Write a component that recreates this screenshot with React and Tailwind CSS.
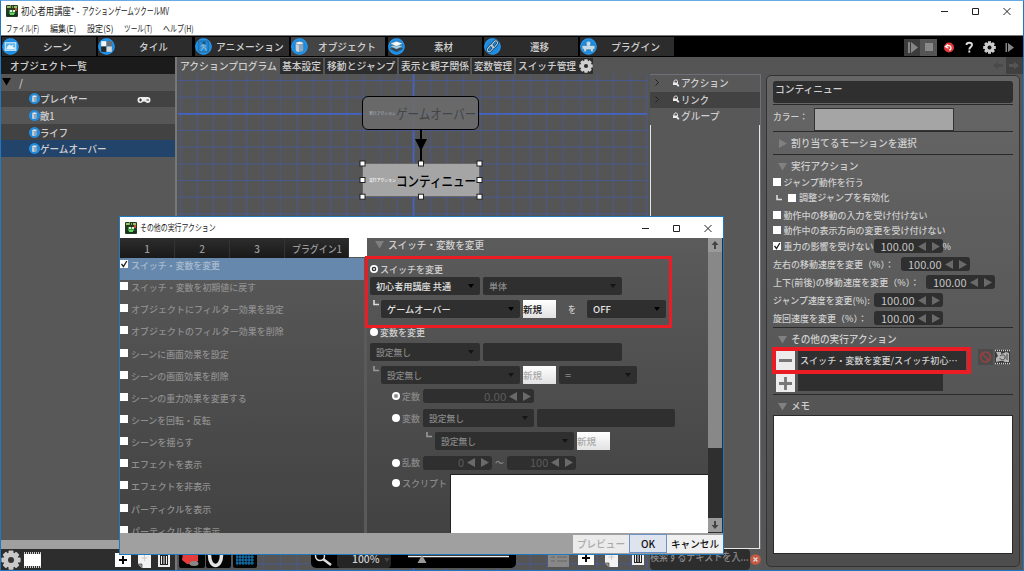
import { useLayoutEffect, useRef, useState } from 'react';

// Text squeezed or stretched horizontally so that it is exactly w pixels wide
const Fit = ({ w, className = '', children }) => {
  const ref = useRef(null);
  const [scale, setScale] = useState(1);

  useLayoutEffect(() => {
    if (ref.current) setScale(w / ref.current.offsetWidth);
  }, [w]);

  return (
    <span className={`inline-block shrink-0 whitespace-nowrap ${className}`} style={{ width: w }}>
      <span ref={ref} className="inline-block origin-left" style={{ transform: `scaleX(${scale})` }}>
        {children}
      </span>
    </span>
  );
};

const Gear = ({ size = 14, color = '#d0d0d0', hole = '#2c2c2c' }) => (
  <svg width={size} height={size} viewBox="0 0 16 16" className="shrink-0">
    <g fill={color}>
      <circle cx="8" cy="8" r="6" />
      {[0, 45, 90, 135].map((a) => (
        <rect key={a} x="6" y="0.3" width="4" height="15.4" rx="0.8" transform={`rotate(${a} 8 8)`} />
      ))}
    </g>
    <circle cx="8" cy="8" r="2.4" fill={hole} />
  </svg>
);

const AppIcon = () => (
  <svg width="12" height="12" viewBox="0 0 12 12" className="shrink-0">
    <rect width="12" height="12" rx="1" fill="#243a22" />
    <path d="M1 1h3v2H1zM8 1h3v2H8z" fill="#9ac36b" />
    <path d="M4 0h1v3H4zM6 1h1v2H6z" fill="#7f9f5e" />
    <path d="M3 5h6v5H3z" fill="#3d9c43" />
    <path d="M4 5h2v2H4zM7 5h2v2H7z" fill="#e8efe0" />
    <path d="M9 3h2v3H9z" fill="#c8542f" />
    <path d="M1 9h10v2H1z" fill="#16341a" />
    <path d="M4 8h4v2H4z" fill="#66d069" />
  </svg>
);

const WindowButtons = ({ className = '' }) => (
  <svg width="70" height="10" viewBox="0 0 70 10" fill="none" stroke="#222" className={`shrink-0 ${className}`}>
    <path d="M0 5.5h7" />
    <path d="M31.5 2.5h6v6h-6z" />
    <path d="M62.5 2l7 7M69.5 2l-7 7" />
  </svg>
);

const cylinder = (
  <g>
    <path d="M4.5 5v6.5c0 2 7 2 7 0V5z" fill="#8ea6b8" />
    <path d="M4.5 5v6.5c0 1 1.5 1.4 3 1.5V5z" fill="#c3d1db" />
    <ellipse cx="8" cy="4.8" rx="3.5" ry="1.5" fill="#eef3f6" stroke="#587287" strokeWidth=".5" />
  </g>
);

const tabGlyphs = {
  scene: (
    <g>
      <rect x="3" y="4.5" width="10" height="7" fill="#55b4ee" stroke="#e6f3fb" />
      <path d="M4 10.5h8V9l-2-.5 1-2-3 .5-1-1L5 8z" fill="#e6f3fb" />
    </g>
  ),
  tile: (
    <g>
      <path d="M3 3h5v5H3z" fill="#f5f5f5" />
      <path d="M8 3h5v5H8z" fill="#6b6f73" />
      <path d="M3 8h5v5H3z" fill="#262626" />
      <path d="M8 8h5v5H8z" fill="#dadada" />
    </g>
  ),
  anime: (
    <g fill="none" stroke="#174f78" strokeWidth="1.1">
      <rect x="3.5" y="3" width="9" height="10" stroke="#2b6e9e" />
      <circle cx="8.5" cy="4.8" r="1" fill="#6e9ab5" />
      <path d="M8.5 6L7.5 9l-2 3M7.8 8.8l2.2 1 .5 2.4M5.5 8l2-1.6 3 1.6" stroke="#8fb3c9" />
    </g>
  ),
  object: cylinder,
  material: (
    <g stroke="#33536b" strokeWidth=".4">
      <path d="M8 8.2l6 2-6 2.8-6-2.8z" fill="#37434d" />
      <path d="M8 5.8l6 2-6 2.8-6-2.8z" fill="#a6cfe6" />
      <path d="M8 3l6 2.2-6 2.8-6-2.8z" fill="#f3f8fb" />
    </g>
  ),
  link: (
    <g fill="none" stroke="#123f60" strokeWidth="2.2">
      <rect x="2.5" y="8" width="7" height="3.6" rx="1.8" transform="rotate(-50 6 9.8)" />
      <rect x="6.5" y="4" width="7" height="3.6" rx="1.8" transform="rotate(-50 10 5.8)" />
      <g stroke="#bcd3e2" strokeWidth="1">
        <rect x="2.5" y="8" width="7" height="3.6" rx="1.8" transform="rotate(-50 6 9.8)" />
        <rect x="6.5" y="4" width="7" height="3.6" rx="1.8" transform="rotate(-50 10 5.8)" />
      </g>
    </g>
  ),
  plugin: (
    <path
      d="M2 7h4.500C5 4.500 6 3 8 3s3 1.500 1.500 4H14v3.500h-1.500V13H10v-2H6v2H3.500v-2.500H2z"
      fill="#c3dae8"
      stroke="#2a6c98"
      strokeWidth=".5"
    />
  ),
};

const RoundIcon = ({ name, size = 17 }) => (
  <svg width={size} height={size} viewBox="0 0 16 16" className="shrink-0">
    <circle cx="8" cy="8" r="7.800" fill="#1c8be0" />
    <circle cx="8" cy="8" r="7.200" fill="none" stroke="#2b9bf0" strokeWidth=".8" />
    {tabGlyphs[name]}
  </svg>
);

const mainTabs = [
  { label: 'シーン', icon: 'scene', w: 29 },
  { label: 'タイル', icon: 'tile', w: 29 },
  { label: 'アニメーション', icon: 'anime', w: 68 },
  { label: 'オブジェクト', icon: 'object', w: 58, active: true },
  { label: '素材', icon: 'material', w: 19 },
  { label: '遷移', icon: 'link', w: 19 },
  { label: 'プラグイン', icon: 'plugin', w: 49 },
];

const subTabs = [
  { label: '基本設定', w: 39, cls: 'w-[43px]' },
  { label: '移動とジャンプ', w: 68, cls: 'w-[72px]' },
  { label: '表示と親子関係', w: 68, cls: 'w-[71px]' },
  { label: '変数管理', w: 38, cls: 'w-[42px]' },
  { label: 'スイッチ管理', w: 58, cls: 'w-[62px]' },
];

const objects = [
  { label: 'プレイヤー', w: 48, bg: 'bg-[#424242]', pad: true },
  { label: '敵1', w: 15, bg: 'bg-[#565656]' },
  { label: 'ライフ', w: 28, bg: 'bg-[#424242]' },
  { label: 'ゲームオーバー', w: 67, bg: 'bg-[#22436a]' },
];

const menus = [
  { label: 'ファイル(F)', w: 33, gap: 'mr-[11px]' },
  { label: '編集(E)', w: 26, gap: 'mr-[11px]' },
  { label: '設定(S)', w: 26, gap: 'mr-[11px]' },
  { label: 'ツール(T)', w: 28, gap: 'mr-[11px]' },
  { label: 'ヘルプ(H)', w: 31, gap: '' },
];

const TitleBar = () => (
  <div className="h-[35px] shrink-0 border-b border-[#777] bg-white font-normal text-[#222]">
    <div className="flex h-[20px] items-center pl-[5px] pr-[12px]">
      <AppIcon />
      <span className="ml-[3px] flex text-[10px] leading-none">
        <Fit w={58}>初心者用講座* -</Fit>
        <Fit w={87} className="ml-[3px]">アクションゲームツクールMV</Fit>
      </span>
      <WindowButtons className="ml-auto" />
    </div>
    <div className="flex h-[15px] items-center pl-[5px] text-[9px] leading-none">
      {menus.map((m) => (
        <Fit key={m.label} w={m.w} className={m.gap}>{m.label}</Fit>
      ))}
    </div>
  </div>
);

const MainTabs = () => (
  <div className="flex h-[21px] shrink-0 bg-black pl-[1px] pt-px pb-px">
    <div className="flex gap-[2.400px]">
      {mainTabs.map((t) => (
        <div
          key={t.label}
          className={`flex w-[94px] items-center ${t.active ? 'bg-[#444]' : 'bg-[#2c2c2c]'}`}
        >
          <RoundIcon name={t.icon} />
          <div className="flex flex-1 justify-center pb-px text-[10px]">
            <Fit w={t.w}>{t.label}</Fit>
          </div>
        </div>
      ))}
    </div>
    <svg width="120" height="18" viewBox="903 40 120 18" className="ml-auto mt-[2px]">
      <path d="M904 40h16v17h-16z" fill="#3c3c3c" />
      <path d="M920 40h17v17h-17z" fill="#555" />
      <path d="M908 43h2v11h-2zM911 43l7 5.500-7 5.500z" fill="#858585" />
      <path d="M925 44h8v8h-8z" fill="#888" />
      <circle cx="949" cy="48.500" r="5" fill="#e8393b" />
      <path d="M946 48c1-2 5-2 5 1 0 1.500-1 2-2 2M948 45.500l-2.500 2.200 3 1.500" fill="none" stroke="#fff" strokeWidth="1.200" />
      <path d="M966.500 46c0-3 5.500-3 5.500 0 0 2-2.700 2-2.700 4.500M969.300 51.500v2" fill="none" stroke="#ddd" strokeWidth="1.900" />
      <g fill="#ccc">
        <circle cx="989.500" cy="48.500" r="5" />
        {[0, 45, 90, 135].map((a) => (
          <rect key={a} x="988" y="42.200" width="3" height="12.600" transform={`rotate(${a} 989.500 48.500)`} />
        ))}
      </g>
      <path d="M1005.500 44h1.500v9h-1.500zM1008 44l6 4.500-6 4.500z" fill="#858585" />
      <circle cx="989.500" cy="48.500" r="2" fill="#111" />
    </svg>
  </div>
);

const PlusIcon = () => (
  <svg width="16" height="14" viewBox="0 0 16 14">
    <path d="M0 0h16v14H0z" fill="#fff" />
    <path d="M8 3v8M4 7h8" stroke="#000" strokeWidth="2" />
  </svg>
);

const PageIcon = () => (
  <svg width="13" height="16" viewBox="0 0 13 16">
    <path d="M0 0h13v16H4l-4-4z" fill="#f2f2f2" />
    <path d="M0 12h4v4" fill="#999" stroke="#333" strokeWidth=".6" />
    <path d="M6.500 3v6M3.500 6h6" stroke="#ccc" />
  </svg>
);

const TrashIcon = () => (
  <svg width="12" height="14" viewBox="0 0 12 14">
    <path d="M0 0h12v14H0z" fill="#eee" />
    <path d="M2 2h8v10H2z" fill="#222" />
    <path d="M3.500 3v8M6 3v8M8.500 3v8" stroke="#eee" />
  </svg>
);

const ObjectList = () => (
  <div className="flex w-[174px] shrink-0 flex-col bg-[#585858]">
    <div className="flex h-[17px] items-center bg-[#1b1b1b] pl-[9px] text-[10px]">
      <Fit w={77}>オブジェクト一覧</Fit>
    </div>
    <div className="flex h-[16.600px] items-center bg-[#565656] pl-px text-[10px]">
      <svg width="9" height="8"><path d="M0 0h9L4.500 7.500z" fill="#000" /></svg>
      <span className="ml-2">/</span>
    </div>
    {objects.map((o) => (
      <div key={o.label} className={`flex h-[16.600px] items-center pl-[28px] text-[10px] ${o.bg}`}>
        <RoundIcon name="object" size={11} />
        <Fit w={o.w}>{o.label}</Fit>
        {o.pad && (
          <svg width="14" height="8" viewBox="0 0 14 8" className="ml-[49px] mt-[2px]">
            <path d="M3.500 1h7a3 3 0 010 6C9 7 9 5.500 7 5.500S5 7 3.500 7a3 3 0 010-6z" fill="#eee" />
            <path d="M2 4h3M3.500 2.500v3M9.500 4h2.500" stroke="#333" strokeWidth="1.100" />
          </svg>
        )}
      </div>
    ))}
    <div className="flex-1" />
    <div className="h-[9px] bg-[#a0a0a0]" />
    <div className="flex h-[21px] items-center bg-[#2d2d2d]">
      <Gear size={20} color="#c9c9c9" hole="#333" />
      <svg width="17" height="16" viewBox="0 0 17 16" className="ml-[3px]">
        <path d="M0 2h17v12H0z" fill="#fff" />
        <path d="M0 1h17M0 15h17" stroke="#fff" strokeWidth="1.500" strokeDasharray="1 1" />
      </svg>
      <div className="ml-[74px] flex items-center gap-[7px]">
        <PlusIcon />
        <PageIcon />
        <TrashIcon />
      </div>
    </div>
  </div>
);

const gridX = Array.from({ length: 29 }, (_, i) => 3.300 + i * 16.667);
const gridY = Array.from({ length: 30 }, (_, i) => 6.500 + i * 16.667);
const handles = [
  [185.500, 89.500], [244, 89.500], [302.500, 89.500],
  [185.500, 106], [302.500, 106],
  [185.500, 122.700], [244, 122.700], [302.500, 122.700],
];

const Canvas = () => (
  <div className="relative w-[473px] shrink-0 overflow-hidden bg-[#555]">
    <svg width="473" height="497" className="absolute inset-0">
      {gridX.map((x, i) => (
        <path key={i} d={`M${x} 0V497`} stroke={i === 14 ? '#4463c8' : '#4a5a94'} strokeWidth={i === 14 ? 1.8 : 0.9} />
      ))}
      {gridY.map((y, i) => (
        <path key={i} d={`M1 ${y}H470`} stroke={i === 2 ? '#4463c8' : '#4a5a94'} strokeWidth={i === 2 ? 1.6 : 0.9} />
      ))}
      <path d="M244 55v34" stroke="#000" strokeWidth="2" />
      <path d="M238 65h12l-6 12z" fill="#000" />
    </svg>
    <div className="absolute left-[185px] top-[22px] flex h-[34px] w-[117px] items-center rounded-[6px] border border-black bg-[#6b6b6b]/90 pl-[6px] font-normal">
      <Fit w={27} className="text-[4px] text-[#bbb]">実行アクション</Fit>
      <Fit w={80} className="text-[14px] text-[#444]">ゲームオーバー</Fit>
    </div>
    <div className="absolute left-[185px] top-[89px] flex h-[34px] w-[118px] items-center border border-[#666] bg-[#a5a5a5] pl-[6px]">
      <Fit w={27} className="text-[4px] text-white">実行アクション</Fit>
      <Fit w={80} className="text-[14px] text-black">コンティニュー</Fit>
    </div>
    <svg width="473" height="140" className="absolute inset-0">
      {handles.map(([x, y]) => (
        <rect key={`${x}-${y}`} x={x - 2.5} y={y - 2.5} width="5" height="5" fill="#fff" stroke="#222" />
      ))}
    </svg>

    {/* Canvas tools */}
    <div className="absolute bottom-0 left-[2px] flex h-[19px] items-start text-[10px]">
      <svg width="80" height="17" viewBox="0 0 80 17">
        <rect width="26" height="17" rx="2" fill="#050505" />
        <rect x="27" width="25" height="17" rx="2" fill="#050505" />
        <rect x="54" width="24" height="17" rx="2" fill="#050505" />
        <path d="M4 2l15-1v9l-4 3H8L3 9z" fill="#e53b3b" />
        <ellipse cx="15" cy="12.500" rx="4.500" ry="2.500" fill="#888" />
        <path d="M30.500 0v3c0 14 12 14 12 0V0" transform="translate(0 1)" fill="none" stroke="#e4e4e4" strokeWidth="3.500" />
        <path d="M58 1v13M61 1v13M64 1v13M67 1v13M70 1v13M73 1v13M57 3h18M57 6h18M57 9h18M57 12h18" stroke="#1584cd" />
      </svg>
      <div className="ml-[52px] flex h-[17px] w-[205px] items-center rounded-b-[5px] bg-black">
        <svg width="26" height="17" viewBox="0 0 26 17">
          <circle cx="9" cy="5" r="4.500" fill="none" stroke="#ddd" strokeWidth="1.500" />
          <path d="M12 8l8 6" stroke="#ddd" strokeWidth="2.500" />
        </svg>
        <div className="flex h-[16px] w-[54px] items-center rounded bg-[#252525] pb-[3px] pl-[15px]">
          <Fit w={28}>100%</Fit>
          <svg width="6" height="4" className="ml-1 mt-1"><path d="M0 0h6L3 4z" fill="#444" /></svg>
        </div>
        <svg width="104" height="17" viewBox="0 0 104 17" className="ml-[17px]">
          <path d="M0 5.500h101" stroke="#eee" strokeWidth="1.500" />
          <path d="M14 4l4.500 8h-9z" fill="#999" />
        </svg>
      </div>
      <div className="ml-[32px] flex items-start">
        <svg width="21" height="17">
          <path d="M0 0h21v16H0z" fill="#888" />
          <path d="M3 6h4M9 6h10M3 10h4M9 10h10" stroke="#777" strokeWidth="2" />
        </svg>
        <div className="ml-[9px]"><PlusIcon /></div>
        <div className="ml-[11px]"><PageIcon /></div>
        <div className="ml-[14px]"><TrashIcon /></div>
      </div>
    </div>
  </div>
);

const links = [
  { label: 'アクション', w: 48, arrow: true },
  { label: 'リンク', w: 28, arrow: true, dark: true },
  { label: 'グループ', w: 38 },
];

const LinkPanel = () => (
  <div className="flex w-[111px] flex-col bg-[#585858]">
    <div className="flex-1 border-r border-t border-[#6f6f7c]">
      {links.map((l) => (
        <div key={l.label} className={`flex h-[16.600px] items-center pl-[5px] pb-px text-[10px] ${l.dark ? 'bg-[#424242]' : ''}`}>
          <svg width="5" height="7" viewBox="0 0 5 7" className={l.arrow ? '' : 'invisible'}>
            <path d="M.5.500l3 3-3 3" fill="none" stroke="#222" />
          </svg>
          <svg width="8" height="8" viewBox="0 0 8 8" className="ml-[12px] mr-px">
            <path d="M2 4V2.500c0-2 3.500-2 3.500 0V4" fill="none" stroke="#eee" />
            <path d="M1 3.500h4l2.500 3.500-1.500.8L4.500 6H1z" fill="#eee" />
          </svg>
          <Fit w={l.w}>{l.label}</Fit>
        </div>
      ))}
      <div className="h-[424px] border border-t-0 border-[#e5e5e5]" />
    </div>
    <div className="flex h-[22px] items-center">
      <div className="h-full w-[100px] overflow-hidden rounded bg-[#2d2d2d] pt-[2px] text-[11px] leading-[11px] text-[#888]">
        <Fit w={99}>検索するテキストを入...</Fit>
      </div>
      <svg width="11" height="11" className="shrink-0">
        <circle cx="5.500" cy="5.500" r="5.300" fill="#c55a40" />
        <path d="M3.500 3.500l4 4M7.500 3.500l-4 4" stroke="#ddd" strokeWidth="1.300" />
      </svg>
    </div>
  </div>
);

const Tri = ({ right }) => (
  <svg width="9" height="9" viewBox="0 0 9 9" className="shrink-0">
    <path d={right ? 'M1 0l8 4.500-8 4.500z' : 'M0 1h9L4.500 8.500z'} fill="#808080" />
  </svg>
);

const Check = ({ on }) => (
  <svg width="8" height="8" viewBox="0 0 8 8" className="shrink-0">
    <path d="M0 0h8v8H0z" fill="#fff" />
    {on && <path d="M1.500 4l2 2.500L6.800 1" fill="none" stroke="#222" strokeWidth="1.300" />}
  </svg>
);

const Corner = ({ className = '', dim }) => (
  <svg width="6" height="6" viewBox="0 0 6 6" className={`shrink-0 ${className}`}>
    <path d="M1 0v4.500h5" fill="none" stroke={dim ? '#999' : '#ddd'} strokeWidth="1.600" />
  </svg>
);

const Spin = ({ value, w, vw, dim, className = '' }) => (
  <div
    className={`flex h-[14px] shrink-0 items-center justify-end rounded-[3px] bg-[#2f2f2f] pr-[3px] text-[11px] font-normal leading-none ${dim ? 'text-[#5c5c5c]' : 'text-[#c4c4c4]'} ${className}`}
    style={{ width: w }}
  >
    <Fit w={vw}>{value}</Fit>
    <svg width="22" height="9" viewBox="0 0 22 9" className="ml-[3px]">
      <path d="M8 0v9L0 4.500zM14 0v9l8-4.500z" fill="#6a6a6a" />
    </svg>
  </div>
);

const checks = [
  { label: 'ジャンプ動作を行う', w: 80, h: 'h-[16px]' },
  { label: '調整ジャンプを有効化', w: 90, h: 'h-[15px]', sub: true },
  { label: '動作中の移動の入力を受け付けない', w: 144, h: 'h-[18px] pt-[2px]' },
  { label: '動作中の表示方向の変更を受け付けない', w: 162, h: 'h-[14px]' },
];

const speeds = [
  { label: '左右の移動速度を変更（%）：', w: 121, gap: 'ml-[7px]' },
  { label: '上下(前後)の移動速度を変更（%）：', w: 146, gap: 'ml-[7px]' },
  { label: 'ジャンプ速度を変更(%):', w: 97, gap: 'ml-[4px]' },
  { label: '旋回速度を変更（%）：', w: 94, gap: 'ml-[7px]' },
];

const Properties = () => (
  <div className="flex flex-1 flex-col bg-[#555]">
    <div className="flex h-[17px] shrink-0 justify-end">
      <svg width="34" height="17" viewBox="0 0 34 17">
        <path d="M17 0h17v17H17z" fill="#404040" />
        <path d="M4 8.500l5-4v2.500h5v3H9v2.500z" fill="#4a4a4a" />
        <path d="M30 8.500l-5-4v2.500h-5v3h5v2.500z" fill="#555" />
      </svg>
    </div>
    <div className="ml-[2px] mr-[3px] mb-[3px] mt-px flex flex-1 flex-col rounded-[5px] border border-[#333] bg-linear-to-b from-[#666] to-[#4d4d4d] px-[6px] text-[9px] leading-none">
      <div className="mt-[5px] h-[22px] shrink-0 rounded-[3px] bg-[#2f2f2f] pl-[2px] pt-[3px] text-[10px]">
        <Fit w={67}>コンティニュー</Fit>
      </div>
      <div className="mt-[1px] flex h-[28px] shrink-0 border-b border-t border-[#2a2a2a] pt-[3px]">
        <Fit w={35} className="pt-[4px]">カラー：</Fit>
        <div className="ml-[6px] h-[23px] w-[140px] border border-[#333] bg-[#a5a5a5]" />
      </div>
      <div className="flex h-[23px] shrink-0 items-center border-b border-[#2a2a2a] pl-[5px] text-[10px]">
        <Tri right />
        <Fit w={126} className="ml-[4px]">割り当てるモーションを選択</Fit>
      </div>
      <div className="flex h-[19px] shrink-0 items-end pb-[3px] pl-[5px] text-[10px]">
        <Tri />
        <Fit w={68} className="ml-[4px]">実行アクション</Fit>
      </div>
      {checks.map((c) => (
        <div key={c.label} className={`flex shrink-0 items-center ${c.h}`}>
          {c.sub && <Corner className="ml-[3px] mr-[6px]" />}
          <Check />
          <Fit w={c.w} className="ml-[2.500px]">{c.label}</Fit>
        </div>
      ))}
      <div className="flex h-[18px] shrink-0 items-center">
        <Check on />
        <Fit w={90} className="ml-[2.500px]">重力の影響を受けない</Fit>
        <Spin value="100.00" w={69} vw={34} />
        <Fit w={8}>%</Fit>
      </div>
      {speeds.map((s) => (
        <div key={s.label} className="flex h-[18px] shrink-0 items-center">
          <Fit w={s.w}>{s.label}</Fit>
          <Spin value="100.00" w={69} vw={34} className={s.gap} />
        </div>
      ))}
      <div className="flex h-[20px] shrink-0 items-end border-t border-[#2a2a2a] pb-[3px] pl-[5px] text-[10px]">
        <Tri />
        <Fit w={106} className="ml-[4px]">その他の実行アクション</Fit>
      </div>
      <div className="flex h-[26px] shrink-0">
        <div className="-ml-px flex h-[27px] w-[199px] shrink-0 items-center border-[4px] border-[#ec1c24]">
          <div className="flex h-[19px] w-[19px] items-center justify-center bg-[#ececec]">
            <div className="h-[3px] w-[13px] bg-[#777]" />
          </div>
          <div className="ml-[3px] flex h-[19px] w-[168px] items-center bg-[#2f2f2f] pl-[2px]">
            <Fit w={158}>スイッチ・変数を変更/スイッチ初心…</Fit>
          </div>
        </div>
        <svg width="33" height="17" viewBox="0 0 33 17" className="ml-[7px] mt-[2px]">
          <path d="M0 0h15v16H0z" fill="#4b4b4b" />
          <circle cx="7.500" cy="8" r="5" fill="none" stroke="#9c4040" strokeWidth="1.500" />
          <path d="M4 4.500l7 7" stroke="#9c4040" strokeWidth="1.500" />
          <path d="M17 1h15v14H17z" fill="#3a3a3a" />
          <path d="M17 1.500h15M17 14.500h15" stroke="#ccc" strokeWidth="1.500" strokeDasharray="1 1" />
          <path d="M18 3h5v2l3-1 2-1 3 1v9h-4l-2-1h-3l-4 1V9l2-2z" fill="#b4b4b4" />
          <path d="M22 7c2-2 6-1 5 2s-5 2-5 0M29 5v6" stroke="#444" fill="none" />
        </svg>
      </div>
      <div className="flex h-[22px] shrink-0 border-b border-[#2a2a2a] pl-[3px] pt-px">
        <div className="flex h-[18px] w-[19px] items-center justify-center bg-[#ececec]">
          <svg width="13" height="13"><path d="M6.500 0v13M0 6.500h13" stroke="#777" strokeWidth="2.800" /></svg>
        </div>
        <div className="ml-[3px] h-[17px] w-[145px] bg-[#2f2f2f]" />
      </div>
      <div className="flex h-[20px] shrink-0 items-center pl-[5px] pt-[2px] text-[10px]">
        <Tri />
        <Fit w={19} className="ml-[4px]">メモ</Fit>
      </div>
      <div className="h-[139px] shrink-0 border border-[#2a2a2a] bg-white" />
    </div>
  </div>
);

const dialogTabs = [
  { label: '1', cls: 'w-[55px]' },
  { label: '2', cls: 'w-[55px]' },
  { label: '3', cls: 'w-[55px]' },
  { label: 'プラグイン1', cls: 'w-[64px]', w: 50 },
];

const actions = [
  { label: 'スイッチ・変数を変更', w: 89, on: true },
  { label: 'スイッチ・変数を初期値に戻す', w: 125 },
  { label: 'オブジェクトにフィルター効果を設定', w: 153 },
  { label: 'オブジェクトのフィルター効果を削除', w: 153 },
  { label: 'シーンに画面効果を設定', w: 98 },
  { label: 'シーンの画面効果を削除', w: 98 },
  { label: 'シーンの重力効果を変更する', w: 116 },
  { label: 'シーンを回転・反転', w: 80 },
  { label: 'シーンを揺らす', w: 62 },
  { label: 'エフェクトを表示', w: 71 },
  { label: 'エフェクトを非表示', w: 80 },
  { label: 'パーティクルを表示', w: 80 },
  { label: 'パーティクルを非表示', w: 89 },
];

const Radio = ({ on }) => (
  <svg width="8" height="8" viewBox="0 0 8 8" className="shrink-0">
    <circle cx="4" cy="4" r="4" fill="#fff" />
    {on && <circle cx="4" cy="4" r="2.300" fill={on === 'dim' ? '#aaa' : '#333'} />}
    {on && <circle cx="4" cy="4" r="1" fill={on === 'dim' ? '#777' : '#eee'} />}
  </svg>
);

const Select = ({ label, w, lw, dim, className = '' }) => (
  <div
    className={`flex h-[18px] shrink-0 items-center rounded-[2px] bg-[#2f2f2f] pl-[6px] pr-[6px] ${dim ? 'text-[#888]' : 'text-[#e4e4e4]'} ${className}`}
    style={{ width: w }}
  >
    <Fit w={lw}>{label}</Fit>
    <svg width="6" height="4" className="ml-auto"><path d="M0 0h6L3 4z" fill={dim ? '#151515' : '#000'} /></svg>
  </div>
);

const NewButton = ({ dim }) => (
  <div className={`ml-[3px] flex h-[18px] w-[33px] shrink-0 items-center bg-linear-to-b from-white to-[#e2e2e2] ${dim ? 'text-[#aaa]' : 'text-[#111]'}`}>
    <Fit w={19}>新規</Fit>
  </div>
);

const Blank = ({ w }) => <div className="ml-[3px] h-[18px] shrink-0 rounded-[2px] bg-[#2f2f2f]" style={{ width: w }} />;

const SwitchForm = () => (
  <div className="flex w-[341px] shrink-0 flex-col bg-linear-to-b from-[#5b5b5b] to-[#424242] pl-[2px] text-[9px] leading-none">
    <div className="flex h-[18px] shrink-0 items-start pl-[6px] pt-[2px] text-[10px]">
      <Tri />
      <Fit w={96} className="ml-[4px]">スイッチ・変数を変更</Fit>
    </div>
    <div className="-ml-[4px] h-[72px] w-[307px] shrink-0 border-[3px] border-[#ec1c24] pl-px">
      <div className="mt-[3px] flex h-[14px] items-center pl-[1px]">
        <Radio on />
        <Fit w={63} className="ml-[2px]">スイッチを変更</Fit>
      </div>
      <div className="mt-[1px] flex pl-px">
        <Select label="初心者用講座 共通" w={110} lw={75} />
        <Select label="単体" w={139} lw={18} dim className="ml-[3px]" />
      </div>
      <div className="mt-[5px] flex pl-[4px]">
        <Corner />
        <Select label="ゲームオーバー" w={139} lw={64} className="ml-[2px]" />
        <NewButton />
        <Fit w={8} className="ml-[12px] pt-[5px]">を</Fit>
        <Select label="OFF" w={79} lw={18} className="ml-[11px]" />
      </div>
    </div>
    <div className="flex h-[15px] shrink-0 items-start pl-[1px]">
      <Radio />
      <Fit w={45} className="ml-[2px]">変数を変更</Fit>
    </div>
    <div className="flex shrink-0 pl-[1px]">
      <Select label="設定無し" w={110} lw={35} dim />
      <Blank w={139} />
    </div>
    <div className="mt-[5px] flex shrink-0 pl-[4px]">
      <Corner dim />
      <Select label="設定無し" w={139} lw={35} dim className="ml-[2px]" />
      <NewButton dim />
      <Select label="=" w={78} lw={6} dim className="ml-[3px]" />
    </div>
    <div className="flex h-[24px] shrink-0 items-center pl-[23px] text-[#888]">
      <Radio on="dim" />
      <Fit w={18} className="ml-[2px] mr-[3px]">定数</Fit>
      <Spin value="0.00" w={111} vw={22} dim />
    </div>
    <div className="flex h-[20px] shrink-0 items-center pl-[23px] text-[#888]">
      <Radio />
      <Fit w={18} className="ml-[2px] mr-[3px]">変数</Fit>
      <Select label="設定無し" w={111} lw={35} dim />
      <Blank w={138} />
    </div>
    <div className="mt-[4px] flex shrink-0 pl-[57px]">
      <Corner dim />
      <Select label="設定無し" w={139} lw={35} dim className="ml-[3px]" />
      <NewButton dim />
    </div>
    <div className="mt-px flex h-[23px] shrink-0 items-center pl-[23px] text-[#888]">
      <Radio />
      <Fit w={18} className="ml-[2px] mr-[3px]">乱数</Fit>
      <Spin value="0" w={69} vw={6} dim />
      <Fit w={9} className="mx-[3px]">～</Fit>
      <Spin value="100" w={69} vw={18} dim />
    </div>
    <div className="flex flex-1 pl-[23px] text-[#888]">
      <div className="flex h-[18px] items-center">
        <Radio />
        <Fit w={45} className="ml-[2px]">スクリプト</Fit>
      </div>
      <div className="ml-[3px] flex-1 border-l border-t border-[#222] bg-white" />
    </div>
  </div>
);

const Dialog = () => (
  <div className="absolute left-[118px] top-[215px] flex h-[339px] w-[605px] flex-col border border-[#2079bf] bg-[#555]">
    <div className="flex h-[21px] shrink-0 items-center bg-white pl-[5px] pr-[11px] text-[#222]">
      <AppIcon />
      <Fit w={76} className="ml-[3px] text-[9px] font-normal">その他の実行アクション</Fit>
      <WindowButtons className="ml-auto" />
    </div>
    <div className="flex min-h-0 flex-1">
      <div className="flex w-[247px] shrink-0 flex-col">
        <div className="flex h-[20px] shrink-0 bg-[#555] text-[10px] text-[#999]">
          {dialogTabs.map((t) => (
            <div key={t.label} className={`flex items-center justify-center border-r border-[#333] bg-linear-to-b from-[#2d2d2d] to-[#191919] ${t.cls}`}>
              {t.w ? <Fit w={t.w}>{t.label}</Fit> : t.label}
            </div>
          ))}
          <div className="h-[19px] w-[18px] bg-white" />
        </div>
        <div className="min-h-0 flex-1 overflow-hidden border-r-[3px] border-[#5a5a5a] bg-linear-to-b from-[#585858] to-[#424242] text-[9px] leading-none text-[#8f8f8f]">
          {actions.map((a) => (
            <div key={a.label} className={`flex h-[22.150px] items-start pt-[2px] ${a.on ? 'bg-[#6688ad] text-[#a9bccf]' : ''}`}>
              <Check on={a.on} />
              <Fit w={a.w} className="ml-[3px] pt-[1px]">{a.label}</Fit>
            </div>
          ))}
        </div>
      </div>
      <SwitchForm />
      <div className="flex w-[15px] flex-col bg-[#2f2f2f]">
        <svg width="14" height="14" viewBox="0 0 14 14" className="shrink-0">
          <path d="M0 0h14v14H0z" fill="#9a9a9a" />
          <path d="M7 11V5" stroke="#444" strokeWidth="2" />
          <path d="M3.500 7L7 3l3.500 4z" fill="#444" />
        </svg>
        <div className="h-[196px] w-[14px] bg-[#888]" />
        <svg width="14" height="14" viewBox="0 0 14 14" className="mt-auto mb-px shrink-0">
          <path d="M0 0h14v14H0z" fill="#9a9a9a" />
          <path d="M7 3v6" stroke="#444" strokeWidth="2" />
          <path d="M3.500 7L7 11l3.500-4z" fill="#444" />
        </svg>
      </div>
    </div>
    <div className="flex h-[21px] shrink-0 items-center justify-end bg-[#a0a0a0] text-[10px] text-[#111]">
      <div className="flex h-[18px] w-[56px] items-center justify-center bg-[#ebebeb] text-[#aaa]">
        <Fit w={48}>プレビュー</Fit>
      </div>
      <div className="flex h-[19px] w-[38px] items-center justify-center border border-[#6d92c9] bg-[#dde4ee]">
        <Fit w={14}>OK</Fit>
      </div>
      <div className="flex h-[18px] w-[56px] items-center justify-center bg-[#f0f0f0]">
        <Fit w={48}>キャンセル</Fit>
      </div>
    </div>
  </div>
);

const App = () => (
  <div className="relative flex h-[571px] w-[1024px] flex-col overflow-hidden border border-[#2079bf] border-t-[#6aaae2] bg-[#555] font-['Noto_Sans_CJK_JP',sans-serif] font-medium text-[#cfcfcf]">
    <TitleBar />
    <MainTabs />
    <div className="flex min-h-0 flex-1">
      <ObjectList />
      <div className="w-[2px] shrink-0 bg-[#777]" />
      <div className="flex w-[587px] shrink-0 flex-col">
        <div className="flex h-[17px] shrink-0 items-center gap-[2px] bg-[#555] pl-[3px] text-[10px]">
          <Fit w={97} className="mr-px">アクションプログラム</Fit>
          {subTabs.map((t) => (
            <div key={t.label} className={`flex h-[16px] items-center justify-center bg-[#2d2d2d] ${t.cls}`}>
              <Fit w={t.w}>{t.label}</Fit>
            </div>
          ))}
          <div className="-ml-[2px] flex h-[16px] w-[15px] items-center justify-center bg-[#2d2d2d]">
            <Gear />
          </div>
        </div>
        <div className="flex min-h-0 flex-1">
          <Canvas />
          <LinkPanel />
        </div>
      </div>
      <Properties />
    </div>
    <Dialog />
  </div>
);

export default App;
